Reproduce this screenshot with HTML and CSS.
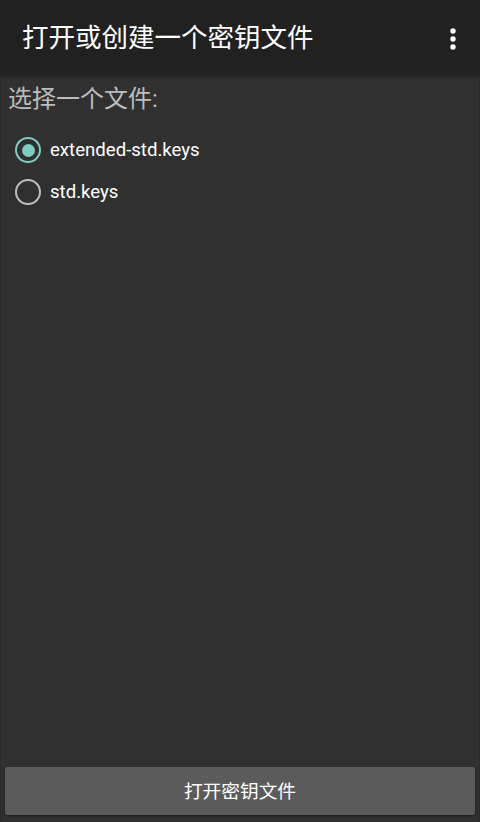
FILE: index.html
```html
<!DOCTYPE html>
<html lang="zh">
<head>
<meta charset="utf-8">
<link rel="stylesheet" href="styles.css">
</head>
<body>
<div class="app">
  <header class="toolbar">
    <h1 class="title">打开或创建一个密钥文件</h1>
    <div class="menu">
      <svg width="8" height="24" viewBox="0 0 8 24"><circle cx="4" cy="4" r="2.7" fill="#fff"/><circle cx="4" cy="12" r="2.7" fill="#fff"/><circle cx="4" cy="20" r="2.7" fill="#fff"/></svg>
    </div>
  </header>
  <main class="content">
    <div class="label">选择一个文件:</div>
    <div class="radios">
      <div class="radio checked">
        <span class="ring"><span class="dot"></span></span>
        <span class="rtext">extended-std.keys</span>
      </div>
      <div class="radio">
        <span class="ring"></span>
        <span class="rtext">std.keys</span>
      </div>
    </div>
  </main>
  <footer class="footer">
    <button class="btn">打开密钥文件</button>
  </footer>
</div>
</body>
</html>
```
FILE: styles.css
```css
* { box-sizing: border-box; }
html, body { margin: 0; padding: 0; height: 100%; }
body {
  background: #303030;
  font-family: Roboto, "Noto Sans CJK SC", sans-serif;
  color: #fff;
}
.app {
  height: 822px;
  display: flex;
  flex-direction: column;
  border-left: 1px solid #2a2a2a;
  border-right: 1px solid #2a2a2a;
}
.toolbar {
  height: 75px;
  background: #212121;
  display: flex;
  align-items: center;
  padding: 2px 22px 0 21px;
  box-shadow: 0 1px 3px rgba(0,0,0,0.5);
  position: relative;
  z-index: 1;
}
.title {
  flex: 1;
  margin: 0;
  font-size: 26.5px;
  font-weight: normal;
  color: #fff;
  line-height: 1;
}
.menu { display: flex; align-items: center; }
.content {
  flex: 1;
  padding: 9px 0 0 7px;
}
.label {
  font-size: 24px;
  color: #bdbdbd;
  line-height: 30px;
}
.radios {
  padding-top: 15px;
  padding-left: 7px;
}
.radio {
  display: flex;
  align-items: center;
  height: 42px;
}
.ring {
  width: 26px;
  height: 26px;
  border-radius: 50%;
  border: 2.7px solid #bdbdbd;
  display: flex;
  align-items: center;
  justify-content: center;
  margin-right: 9px;
}
.radio.checked .ring { border-color: #80cbc4; }
.dot {
  width: 13px;
  height: 13px;
  border-radius: 50%;
  background: #80cbc4;
}
.rtext {
  font-size: 18.6px;
  color: #fff;
  padding-bottom: 1px;
}
.footer {
  padding: 0 4px 7px 4px;
}
.btn {
  width: 100%;
  height: 48px;
  background: #5b5b5c;
  border: none;
  border-radius: 2px;
  box-shadow: 0 1px 2px rgba(0,0,0,0.5);
  color: #fff;
  font-family: Roboto, "Noto Sans CJK SC", sans-serif;
  font-size: 18.7px;
  padding-bottom: 4px;
}
```
